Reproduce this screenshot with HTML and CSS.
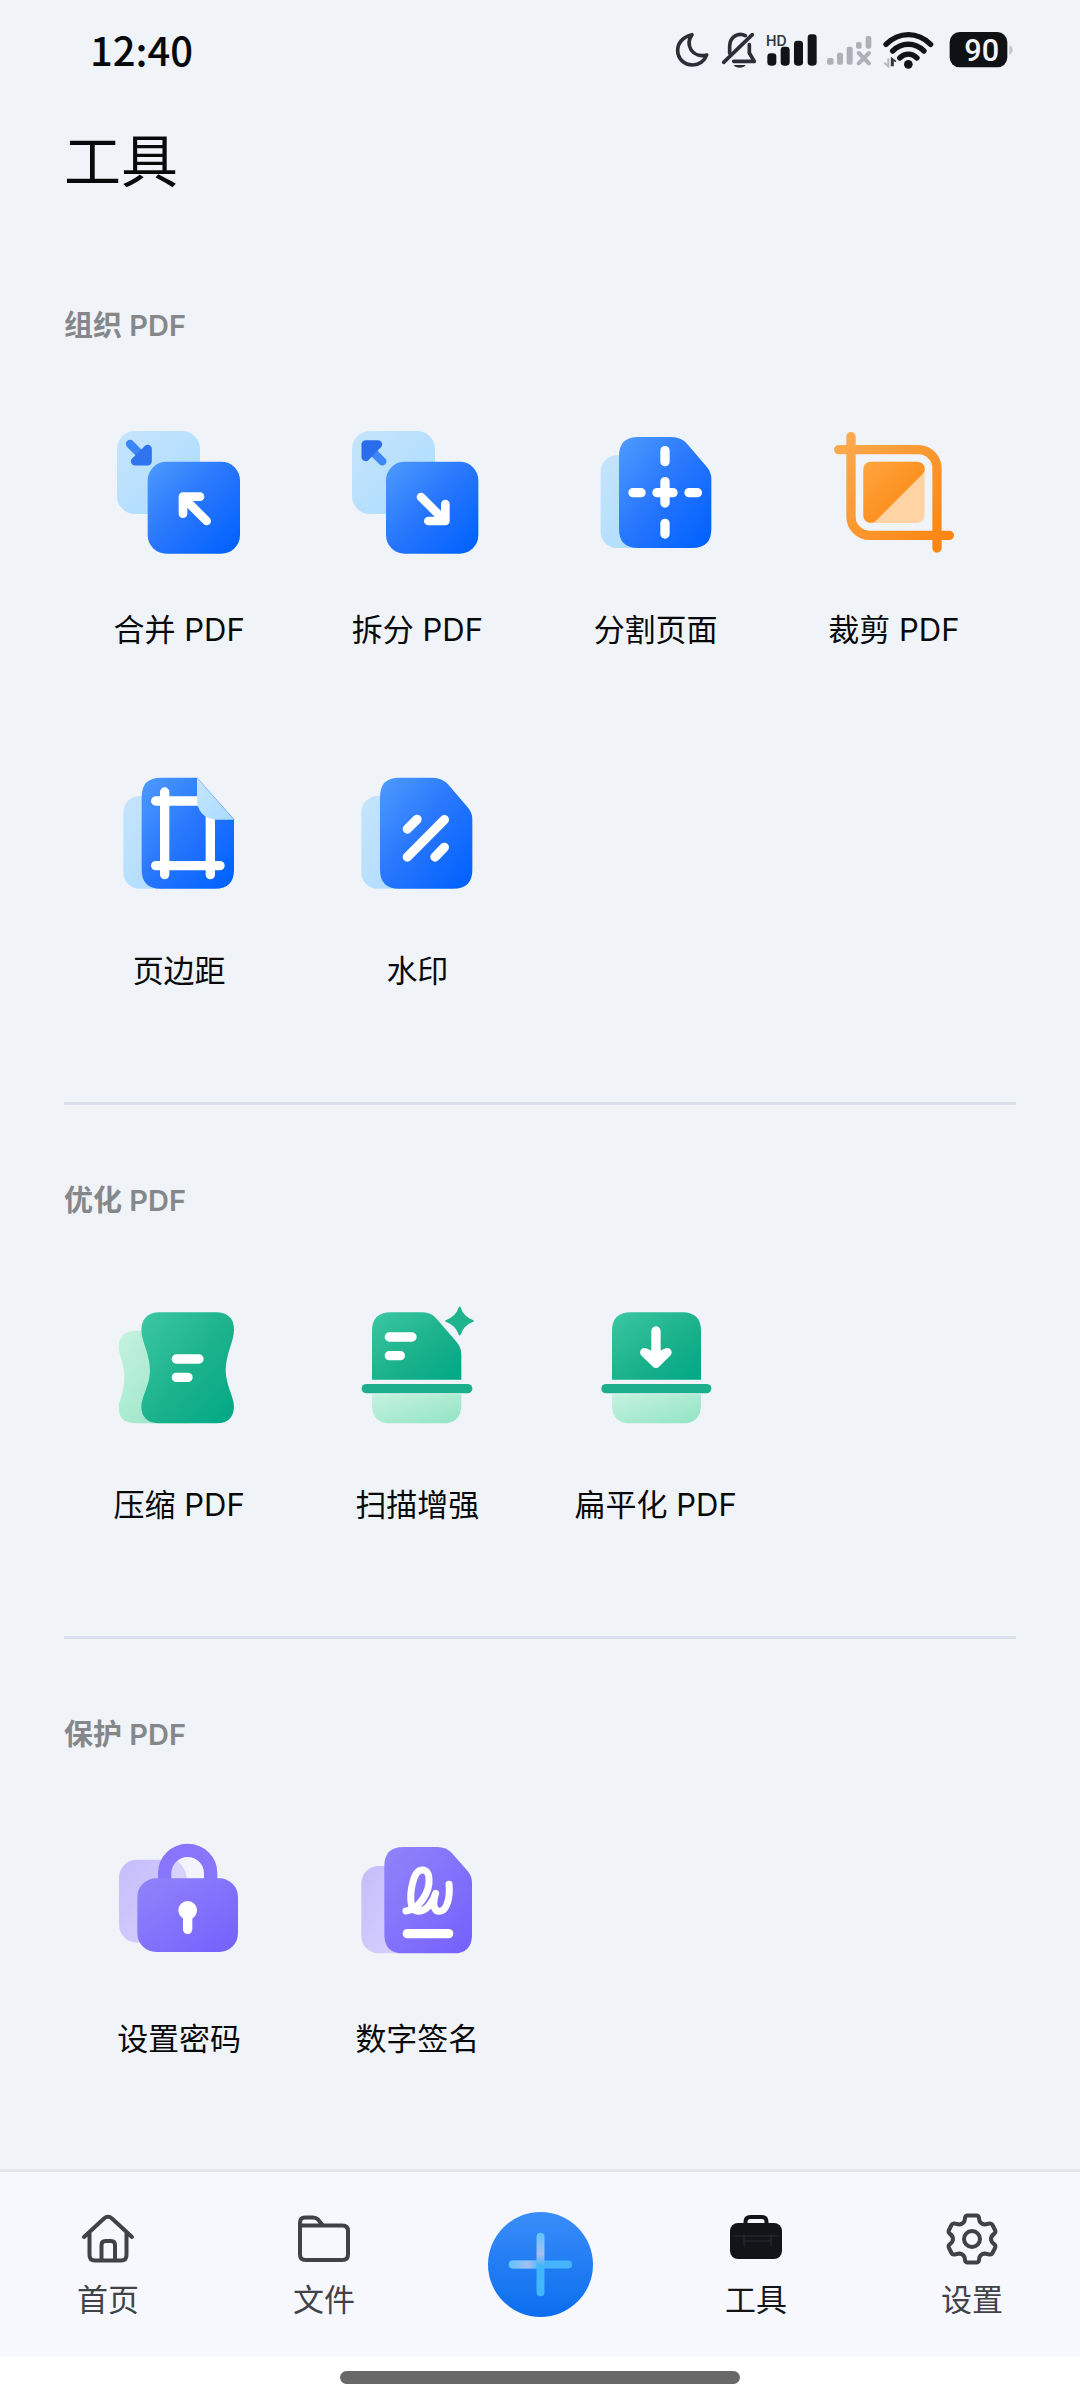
FILE: index.html
```html
<!DOCTYPE html>
<html lang="zh-CN">
<head>
  <meta charset="UTF-8" />
  <meta name="viewport" content="width=device-width, initial-scale=1.0" />
  <title>工具</title>
  <link rel="stylesheet" href="styles.css">
</head>
<body>
  <!-- Shared gradients and shapes -->
  <svg class="defs" width="0" height="0" aria-hidden="true">
    <defs>
      <linearGradient id="blue" x1="0" y1="0" x2="1" y2="1">
        <stop offset="0" stop-color="#4e9bff" /><stop offset="0.5" stop-color="#2675fc" /><stop offset="0.95" stop-color="#0062ff" />
      </linearGradient>
      <linearGradient id="sky" x1="0" y1="0" x2="1" y2="1">
        <stop offset="0" stop-color="#c6e4fc" /><stop offset="1" stop-color="#aadcff" />
      </linearGradient>
      <linearGradient id="orange" x1="0" y1="0" x2="1" y2="1">
        <stop offset="0" stop-color="#ffa63f" /><stop offset="1" stop-color="#fb810b" />
      </linearGradient>
      <linearGradient id="orange-line" gradientUnits="userSpaceOnUse" x1="822" y1="100" x2="1182" y2="460">
        <stop offset="0" stop-color="#fdac52" /><stop offset="1" stop-color="#fa820c" />
      </linearGradient>
      <linearGradient id="green" x1="0" y1="0" x2="1" y2="1">
        <stop offset="0" stop-color="#3cc8a4" /><stop offset="0.5" stop-color="#1db38c" /><stop offset="1" stop-color="#02a886" />
      </linearGradient>
      <linearGradient id="mint" x1="0" y1="0" x2="1" y2="1">
        <stop offset="0" stop-color="#c6f2e0" /><stop offset="1" stop-color="#92e4c5" />
      </linearGradient>
      <linearGradient id="purple" x1="0" y1="0" x2="1" y2="1">
        <stop offset="0" stop-color="#9184fa" /><stop offset="1" stop-color="#7460fd" />
      </linearGradient>
      <linearGradient id="lilac" x1="0" y1="0" x2="1" y2="1">
        <stop offset="0" stop-color="#c5bdfb" /><stop offset="1" stop-color="#d8d3fd" />
      </linearGradient>
      <linearGradient id="add" x1="0" y1="0" x2="0" y2="1">
        <stop offset="0" stop-color="#3a8df9" /><stop offset="1" stop-color="#0b6eee" />
      </linearGradient>
      <linearGradient id="add-h" gradientUnits="userSpaceOnUse" x1="21" y1="0" x2="53" y2="0">
        <stop offset="0" stop-color="#5cc6fb" /><stop offset="0.6" stop-color="#a5bdf0" /><stop offset="1" stop-color="#45b9fb" />
      </linearGradient>
      <linearGradient id="add-v" gradientUnits="userSpaceOnUse" x1="0" y1="21" x2="0" y2="60">
        <stop offset="0" stop-color="#5cc6fb" /><stop offset="0.55" stop-color="#aabdf2" /><stop offset="0.85" stop-color="#42b7fb" />
      </linearGradient>
      <path id="page" d="M233 114H334Q362 114 380 134L439 203Q453 219 453 239V390Q453 447 396 447H233Q176 447 176 390V171Q176 114 233 114Z" />
    </defs>
  </svg>

  <div class="status-bar">
    <span class="time">12:40</span>
    <div class="status-icons">
      <svg width="36" height="40" viewBox="107 58 108 120">
        <path d="M155 72C128 78 112 97 112 119C112 145 132 163 157 163C176 163 193 151 199 133C180 138 162 132 152 117C144 103 145 86 155 72Z" fill="none" stroke="#2b2e35" stroke-width="11" stroke-linejoin="round" />
      </svg>
      <svg width="35" height="40" viewBox="245 58 105 120">
        <g fill="none" stroke="#2b2e35" stroke-width="11" stroke-linecap="round" stroke-linejoin="round">
          <path d="M250 155L336 72" />
          <path d="M268 128V107C268 76 296 65 315 75" />
          <path d="M327 102V127L342 152H280" />
        </g>
        <path d="M280 163H316C310 174 286 174 280 163Z" fill="#2b2e35" />
      </svg>
      <svg width="50" height="40" viewBox="380 58 150 120">
        <text class="hd" x="377" y="106">HD</text>
        <g fill="#111317">
          <rect x="381" y="128" width="27" height="37" rx="10" />
          <rect x="421" y="108" width="27" height="57" rx="10" />
          <rect x="461" y="90" width="27" height="75" rx="10" />
          <rect x="502" y="71" width="27" height="94" rx="10" />
        </g>
      </svg>
      <svg width="46" height="40" viewBox="560 58 138 120">
        <g fill="#adb0b5">
          <rect x="560" y="142" width="20" height="20" rx="6" />
          <rect x="590" y="126" width="18" height="36" rx="6" />
          <rect x="619" y="108" width="18" height="54" rx="6" />
          <rect x="647" y="94" width="17" height="20" rx="6" />
          <rect x="676" y="76" width="17" height="38" rx="6" />
        </g>
        <path d="M655 127L686 158M686 127L655 158" stroke="#adb0b5" stroke-width="12" stroke-linecap="round" />
      </svg>
      <svg width="51" height="40" viewBox="728 58 153 120">
        <g fill="none" stroke="#111317" stroke-width="16" stroke-linecap="round">
          <path d="M737 101C776 62 832 62 871 101" />
          <path d="M757 121C784 94 824 94 851 121" />
          <path d="M778 142C794 127 814 127 830 142" />
        </g>
        <circle cx="804" cy="161" r="13" fill="#111317" />
        <path d="M754 167V143L767 153M758 149V167" fill="none" stroke="#33363b" stroke-width="5" />
        <path d="M744 143V167L732 156" fill="none" stroke="#b4b7bb" stroke-width="6" />
      </svg>
      <svg width="69" height="40" viewBox="911 58 207 120">
        <rect x="928" y="64" width="173" height="106" rx="30" fill="#101114" />
        <path d="M1107 104Q1117 108 1117 118Q1117 128 1107 132Z" fill="#c2c5c9" />
        <text class="battery" x="1024" y="150" text-anchor="middle">90</text>
      </svg>
    </div>
  </div>

  <header>
    <h1>工具</h1>
  </header>

  <main>
    <section>
      <h2>组织 PDF</h2>
      <div class="tool-grid">
        <button class="tool" type="button">
          <svg viewBox="69 84 396 396">
            <rect x="81" y="96" width="249" height="249" rx="54" fill="url(#sky)" />
            <path d="M120 135L150 165" stroke="#3b86f8" stroke-width="25" stroke-linecap="round" />
            <path d="M173 150V187H135L151 173Z" fill="#2f73ee" stroke="#2f73ee" stroke-width="25" stroke-linejoin="round" />
            <rect x="173" y="188" width="277" height="276" rx="56" fill="url(#blue)" />
            <path d="M350 366L286 302M279 344V293H330" class="mark" />
          </svg>
          <span>合并 PDF</span>
        </button>
        <button class="tool" type="button">
          <svg viewBox="784 84 396 396">
            <rect x="787" y="96" width="249" height="249" rx="54" fill="url(#sky)" />
            <path d="M878 187L850 159" stroke="#3f87f6" stroke-width="25" stroke-linecap="round" />
            <path d="M828 174V136H865L849 152Z" fill="#2a6dea" stroke="#2a6dea" stroke-width="25" stroke-linejoin="round" />
            <rect x="889" y="188" width="277" height="276" rx="56" fill="url(#blue)" />
            <path d="M994 294L1060 360M1067 315V366H1016" class="mark" />
          </svg>
          <span>拆分 PDF</span>
        </button>
        <button class="tool" type="button">
          <svg viewBox="89 84 396 396">
            <rect x="121" y="169" width="160" height="278" rx="48" fill="url(#sky)" />
            <use href="#page" fill="url(#blue)" />
            <path d="M314 155V188M314 248V312M314 373V405M218 281H242M290 281H338M386 281H411" class="mark thick" />
          </svg>
          <span>分割页面</span>
        </button>
        <button class="tool" type="button">
          <svg viewBox="804 84 396 396">
            <path d="M873 113V353A56 56 0 0 0 929 409H1168M836 152H1075A56 56 0 0 1 1131 208V447" fill="none" stroke="url(#orange-line)" stroke-width="28" stroke-linecap="round" />
            <rect x="910" y="188" width="184" height="184" rx="24" fill="#ffd3a4" />
            <path d="M934 188H1070C1094 188 1101 211 1087 226L950 363C934 380 910 370 910 348V212Q910 188 934 188Z" fill="url(#orange)" />
          </svg>
          <span>裁剪 PDF</span>
        </button>
        <button class="tool" type="button">
          <svg viewBox="69 58 396 396">
            <rect x="100" y="142" width="160" height="278" rx="48" fill="url(#sky)" />
            <path d="M212 87H322L432 212V363Q432 420 375 420H212Q155 420 155 363V144Q155 87 212 87Z" fill="url(#blue)" />
            <path d="M197 157H361V378M224 130V378M197 351H390" class="mark thick" />
            <path d="M321 87L432 213H377Q321 205 321 150Z" fill="url(#sky)" />
          </svg>
          <span>页边距</span>
        </button>
        <button class="tool" type="button">
          <svg viewBox="784 58 396 396">
            <rect x="815" y="142" width="160" height="278" rx="48" fill="url(#sky)" />
            <use href="#page" x="695" y="-27" fill="url(#blue)" />
            <path d="M953 241L982 212M953 325L1064 213M1036 325L1064 296" class="mark thick" />
          </svg>
          <span>水印</span>
        </button>
      </div>
    </section>

    <section>
      <h2>优化 PDF</h2>
      <div class="tool-grid">
        <button class="tool" type="button">
          <svg viewBox="69 66 396 396">
            <path d="M134 152H300V430H134Q86 428 86 382C86 360 103 340 103 290C103 250 86 225 86 200Q88 154 134 152Z" fill="url(#mint)" />
            <path d="M204 97H382Q432 100 432 150C432 182 407 225 407 270C407 315 432 350 432 380Q430 428 382 430H204Q155 426 154 380C154 350 180 315 180 270C180 225 154 182 154 150Q156 100 204 97Z" fill="url(#green)" />
            <path d="M259 237H327M259 292H294" class="mark thick" />
          </svg>
          <span>压缩 PDF</span>
        </button>
        <button class="tool" type="button">
          <svg viewBox="784 66 396 396">
            <path d="M847 299V153Q847 97 903 97H999Q1026 97 1042 118L1101 186Q1115 203 1115 224V299Z" fill="url(#green)" />
            <rect x="816" y="312" width="332" height="28" rx="14" fill="#1bb08b" />
            <path d="M847 343H1115V374Q1115 430 1059 430H903Q847 430 847 374Z" fill="url(#mint)" />
            <path d="M1110 82Q1120 113 1150 123Q1120 134 1110 164Q1100 134 1069 123Q1100 113 1110 82Z" fill="#1fb48d" stroke="#1fb48d" stroke-width="5" stroke-linejoin="round" />
            <path d="M899 171H967M899 227H932" class="mark thick" />
          </svg>
          <span>扫描增强</span>
        </button>
        <button class="tool" type="button">
          <svg viewBox="1499 66 396 396">
            <path d="M1565 299V153Q1565 97 1621 97H1776Q1832 97 1832 153V299Z" fill="url(#green)" />
            <rect x="1533" y="312" width="330" height="28" rx="14" fill="#1bb08b" />
            <path d="M1565 343H1832V374Q1832 430 1776 430H1621Q1565 430 1565 374Z" fill="url(#mint)" />
            <path d="M1697 153V230" class="mark thick" />
            <path d="M1662 217L1697 251L1731 217L1697 232Z" class="mark solid" />
          </svg>
          <span>扁平化 PDF</span>
        </button>
      </div>
    </section>

    <section>
      <h2>保护 PDF</h2>
      <div class="tool-grid">
        <button class="tool" type="button">
          <svg viewBox="69 78 396 396">
            <rect x="87" y="149" width="249" height="249" rx="54" fill="url(#lilac)" />
            <path d="M244 206V190A49 49 0 0 1 342 190V206Z" fill="#f3f4fe" />
            <path d="M244 206V180Q250 158 262 152Q286 170 291 206Z" fill="#d5d2fb" />
            <path d="M224 215V190A69 69 0 0 1 362 190V215" fill="none" stroke="#8775fb" stroke-width="40" />
            <rect x="142" y="205" width="302" height="221" rx="56" fill="url(#purple)" />
            <circle cx="293" cy="301" r="28" fill="#fff" />
            <path d="M293 310V358" class="mark thick" />
          </svg>
          <span>设置密码</span>
        </button>
        <button class="tool" type="button">
          <svg viewBox="784 78 396 396">
            <rect x="815" y="168" width="160" height="262" rx="52" fill="url(#lilac)" />
            <path d="M941 111H1043Q1070 111 1087 130L1134 183Q1147 199 1147 219V374Q1147 430 1091 430H941Q884 430 884 374V168Q884 111 941 111Z" fill="url(#purple)" />
            <path d="M953 371H1077" class="mark thick" />
            <path d="M949 303C985 300 1022 248 1018 204C1016 172 985 172 974 202C960 242 955 304 987 304C1010 303 1030 278 1038 250C1029 280 1030 304 1050 304C1072 303 1082 262 1078 223" class="mark pen" />
          </svg>
          <span>数字签名</span>
        </button>
      </div>
    </section>
  </main>

  <nav class="tab-bar">
    <a class="tab" href="#home">
      <svg viewBox="0 0 54 54">
        <path d="M3 25L23 6.500Q27 3 31 6.500L51 25M8.500 21V43Q8.500 48.500 14 48.500H40Q45.500 48.500 45.500 43V21M20.500 48V33Q20.500 29 24.500 29H30Q34 29 34 33V48" />
      </svg>
      <span>首页</span>
    </a>
    <a class="tab" href="#files">
      <svg viewBox="0 0 54 54">
        <path d="M3 13.500V10.500Q3 5.500 8 5.500H16Q19 5.500 21 7.500L26 13.500M3 13.500H45.500Q51 13.500 51 19V42.500Q51 48 45.500 48H8.500Q3 48 3 42.500Z" />
      </svg>
      <span>文件</span>
    </a>
    <button class="add" type="button" aria-label="新建">
      <svg viewBox="0 0 106 106">
        <circle cx="53" cy="53" r="53" fill="url(#add)" />
        <path d="M25 53H81" stroke="#45b4fd" />
        <path d="M25 53H49" stroke="url(#add-h)" />
        <path d="M53 25V81.100" stroke="url(#add-v)" />
      </svg>
    </button>
    <a class="tab active" href="#tools" aria-current="page">
      <svg viewBox="0 0 54 54">
        <path d="M16.500 12V10Q16.500 5 21.500 5H32.500Q37.500 5 37.500 10V12" />
        <rect x="1" y="11" width="52" height="36" rx="8" fill="#131418" stroke="none" />
        <path class="seam" d="M6 24H48M15 22V34M42 22V34M15 29H42" />
      </svg>
      <span>工具</span>
    </a>
    <a class="tab" href="#settings">
      <svg viewBox="0 0 54 54">
        <path d="M22.500 3.500H31.500Q33.500 3.500 34 6L34.500 9Q36 12 39.500 12.500L44.500 11.500Q46.500 11 47.500 13L50 18Q51 20 49.500 21.500Q46 24 46 27Q46 30 49.500 32.500Q51 34 50 36L47.500 41Q46.500 43 44.500 42.500L39.500 41.500Q36 42 34.500 45L34 48Q33.500 50.500 31.500 50.500H22.500Q20.500 50.500 20 48L19.500 45Q18 42 14.500 41.500L9.500 42.500Q7.500 43 6.500 41L4 36Q3 34 4.500 32.500Q8 30 8 27Q8 24 4.500 21.500Q3 20 4 18L6.500 13Q7.500 11 9.500 11.500L14.500 12.500Q18 12 19.500 9L20 6Q20.500 3.500 22.500 3.500Z" />
        <circle cx="27" cy="27" r="8" />
      </svg>
      <span>设置</span>
    </a>
  </nav>
  <div class="home-indicator"><span></span></div>
</body>
</html>
```
FILE: styles.css
```css
* {
  box-sizing: border-box;
}

body {
  font-family: Inter, "Noto Sans CJK SC", sans-serif;
  margin: 0;
  min-height: 100vh;
  background: #f0f4f9;
  color: #08090b;
  display: flex;
  flex-direction: column;
}

h1,
h2 {
  margin: 0;
}

button {
  font: inherit;
  color: inherit;
  background: none;
  border: none;
  padding: 0;
  cursor: pointer;
}

.defs {
  position: absolute;
}

/* Status bar */
.status-bar {
  display: flex;
  justify-content: space-between;
  align-items: center;
  height: 100px;
  padding: 0 67px 0 90px;
}

.time {
  font-family: "Noto Sans CJK SC", sans-serif;
  font-size: 40px;
  font-weight: 500;
  line-height: 48px;
  padding-bottom: 2px;
}

.status-icons {
  display: flex;
  gap: 10px;
}

.status-icons svg {
  overflow: visible;
}

.hd {
  font: 600 42px Inter, sans-serif;
  fill: #33363c;
}

.battery {
  font: 500 92px Roboto, sans-serif;
  fill: #f4f5f7;
}

header {
  padding: 30px 64px 0;
}

h1 {
  font-size: 57px;
  font-weight: 400;
  line-height: 64px;
}

/* Tool sections */
main {
  flex: 1;
  padding: 36px 64px 0;
}

section {
  padding: 76px 0 111px;
}

section + section {
  border-top: 3px solid #dce0ed;
}

section:last-child {
  padding-bottom: 108px;
}

h2 {
  font-size: 29px;
  font-weight: 600;
  line-height: 40px;
  color: #85878b;
}

.tool-grid {
  display: grid;
  grid-template-columns: repeat(4, 1fr);
  row-gap: 118px;
  margin: 81px 3px 0 -4px;
}

.tool {
  display: flex;
  flex-direction: column;
  align-items: center;
  gap: 51px;
  font-size: 31px;
  line-height: 40px;
}

.tool svg {
  width: 132px;
  height: 132px;
}

.mark {
  fill: none;
  stroke: #fff;
  stroke-width: 26;
  stroke-linecap: round;
  stroke-linejoin: round;
}

.thick {
  stroke-width: 28;
}

.solid {
  fill: #fff;
}

.pen {
  stroke-width: 21;
}

/* Bottom tabs */
.tab-bar {
  display: grid;
  grid-template-columns: repeat(5, 1fr);
  align-items: start;
  justify-items: center;
  padding: 40px 0 37px;
  background: #f6f8fd;
  border-top: 3px solid #e4e8eb;
}

.tab {
  display: flex;
  flex-direction: column;
  align-items: center;
  gap: 14px;
  font-size: 31px;
  line-height: 40px;
  color: #404248;
  text-decoration: none;
}

.tab svg {
  width: 54px;
  height: 54px;
  fill: none;
  stroke: currentColor;
  stroke-width: 4;
  stroke-linecap: round;
  stroke-linejoin: round;
}

.tab.active {
  color: #131418;
}

.tab .seam {
  stroke: #2b2d32;
  stroke-width: 1;
}

.add {
  display: flex;
}

.add svg {
  width: 105px;
  height: 105px;
  fill: none;
  stroke-width: 8;
  stroke-linecap: round;
}

.home-indicator {
  display: flex;
  justify-content: center;
  padding: 14px 0 16px;
  background: #fff;
}

.home-indicator span {
  width: 37%;
  height: 13px;
  border-radius: 7px;
  background: #686868;
}
```
